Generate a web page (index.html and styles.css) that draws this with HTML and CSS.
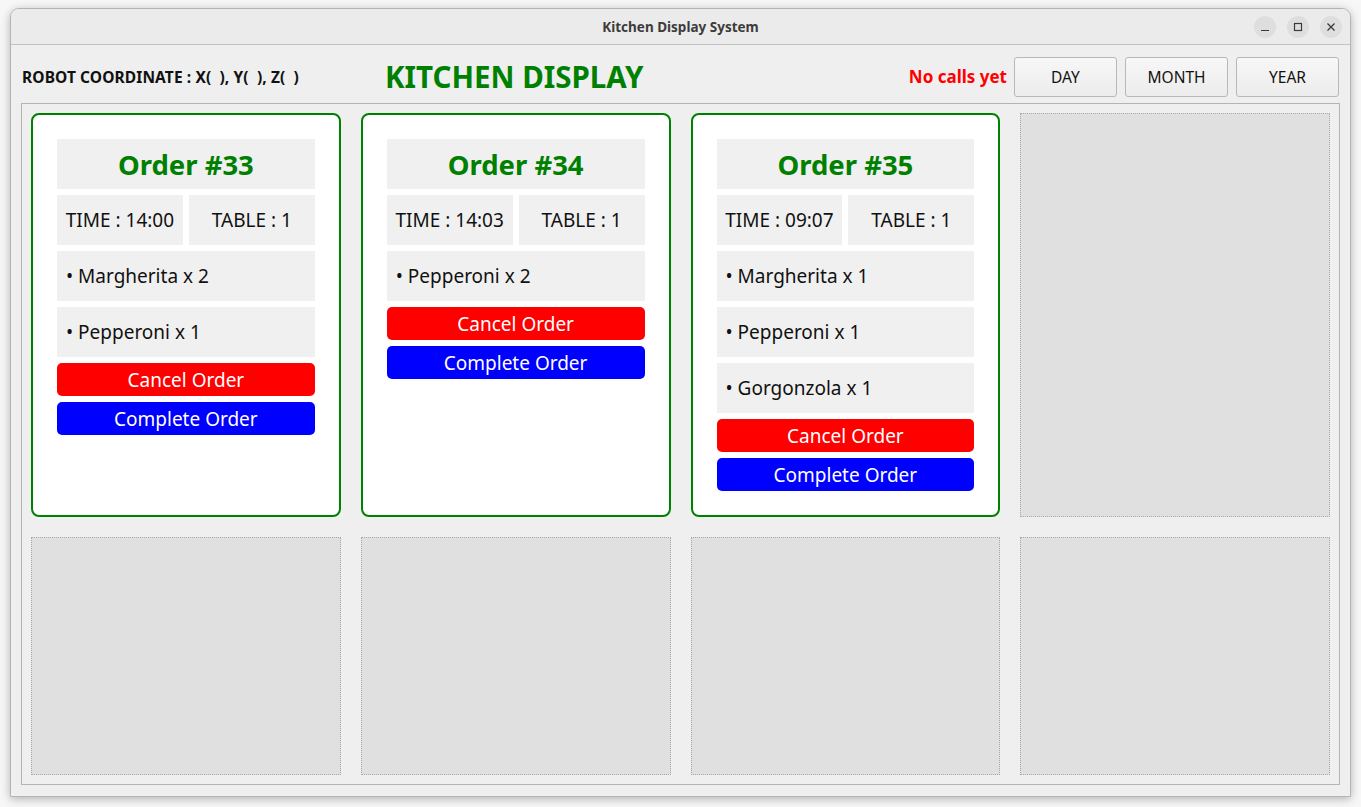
FILE: index.html
```html
<!DOCTYPE html>
<html>
<head>
<meta charset="utf-8">
<title>Kitchen Display System</title>
<link rel="stylesheet" href="styles.css">
</head>
<body>
<div class="window">
  <div class="titlebar">
    <div class="title">Kitchen Display System</div>
    <div class="wm-buttons">
      <span class="wm-btn"><svg width="10" height="10" viewBox="0 0 10 10"><line x1="1" y1="8.5" x2="9" y2="8.5" stroke="#3a3a3a" stroke-width="1.2"/></svg></span>
      <span class="wm-btn"><svg width="10" height="10" viewBox="0 0 10 10"><rect x="1.5" y="1.5" width="7" height="7" fill="none" stroke="#3a3a3a" stroke-width="1.2"/></svg></span>
      <span class="wm-btn"><svg width="10" height="10" viewBox="0 0 10 10"><path d="M1.5 1.5 L8.5 8.5 M8.5 1.5 L1.5 8.5" stroke="#3a3a3a" stroke-width="1.3"/></svg></span>
    </div>
  </div>
  <div class="body">
    <div class="header">
      <div class="robot">ROBOT COORDINATE : X(&nbsp; ), Y(&nbsp; ), Z(&nbsp; )</div>
      <div class="main-title">KITCHEN DISPLAY</div>
      <div class="spacer"></div>
      <div class="calls">No calls yet</div>
      <button class="period">DAY</button>
      <button class="period">MONTH</button>
      <button class="period">YEAR</button>
    </div>
    <div class="frame">
      <div class="card">
        <div class="box order-no">Order #33</div>
        <div class="meta">
          <div class="box meta-cell">TIME : 14:00</div>
          <div class="box meta-cell">TABLE : 1</div>
        </div>
        <div class="box item">• Margherita x 2</div>
        <div class="box item">• Pepperoni x 1</div>
        <div class="action cancel">Cancel Order</div>
        <div class="action complete">Complete Order</div>
      </div>
      <div class="card">
        <div class="box order-no">Order #34</div>
        <div class="meta">
          <div class="box meta-cell">TIME : 14:03</div>
          <div class="box meta-cell">TABLE : 1</div>
        </div>
        <div class="box item">• Pepperoni x 2</div>
        <div class="action cancel">Cancel Order</div>
        <div class="action complete">Complete Order</div>
      </div>
      <div class="card">
        <div class="box order-no">Order #35</div>
        <div class="meta">
          <div class="box meta-cell">TIME : 09:07</div>
          <div class="box meta-cell">TABLE : 1</div>
        </div>
        <div class="box item">• Margherita x 1</div>
        <div class="box item">• Pepperoni x 1</div>
        <div class="box item">• Gorgonzola x 1</div>
        <div class="action cancel">Cancel Order</div>
        <div class="action complete">Complete Order</div>
      </div>
      <div class="empty"></div>
      <div class="empty"></div>
      <div class="empty"></div>
      <div class="empty"></div>
      <div class="empty"></div>
    </div>
  </div>
</div>
</body>
</html>
```

FILE: styles.css
```css
* { box-sizing: border-box; }
html, body { margin: 0; padding: 0; }
body {
  background: #f7f7f7;
  font-family: "Noto Sans", "DejaVu Sans", sans-serif;
  width: 1361px;
  height: 807px;
  overflow: hidden;
  padding: 8px 10px 10px 10px;
}
.window {
  width: 1341px;
  height: 789px;
  background: #efefef;
  border: 1px solid #b4b4b4;
  border-radius: 9px 9px 0 0;
  box-shadow: 0 2px 10px rgba(0,0,0,0.28);
  display: flex;
  flex-direction: column;
  overflow: hidden;
}
.titlebar {
  height: 36px;
  flex: none;
  background: #ebebeb;
  border-bottom: 1px solid #c2c2c2;
  display: flex;
  align-items: center;
  justify-content: center;
  position: relative;
}
.title {
  font-size: 13.5px;
  font-weight: bold;
  color: #3c3c3c;
}
.wm-buttons {
  position: absolute;
  right: 8px;
  top: 7px;
  display: flex;
  gap: 11px;
}
.wm-btn {
  width: 22px;
  height: 22px;
  border-radius: 50%;
  background: #dedede;
  display: flex;
  align-items: center;
  justify-content: center;
}
.body {
  flex: 1;
  display: flex;
  flex-direction: column;
  padding: 0 10px 11px 10px;
}
.header {
  height: 58px;
  flex: none;
  display: flex;
  align-items: center;
  padding: 5px 1px 0 1px;
}
.robot {
  font-size: 15.5px;
  font-weight: bold;
  color: #111;
  letter-spacing: 0.1px;
}
.main-title {
  margin-left: 86px;
  font-size: 29.5px;
  font-weight: bold;
  color: #008000;
}
.spacer { flex: 1; }
.calls {
  font-size: 17px;
  font-weight: bold;
  color: #ff0000;
  margin-right: 7px;
}
.period {
  width: 103px;
  height: 40px;
  margin-left: 8px;
  font-family: inherit;
  font-size: 15.5px;
  color: #111;
  background: linear-gradient(#f7f7f7, #ececec);
  border: 1px solid #b8b8b8;
  border-radius: 3px;
}
.period:first-of-type { margin-left: 0; }
.frame {
  flex: 1;
  border: 1px solid #b4b4b4;
  padding: 9px;
  display: grid;
  grid-template-columns: repeat(4, 1fr);
  grid-template-rows: auto 1fr;
  gap: 20px;
}
.card {
  background: #fff;
  border: 2px solid #008000;
  border-radius: 8px;
  padding: 24px;
  display: flex;
  flex-direction: column;
  gap: 6px;
}
.box {
  height: 50px;
  background: #f0f0f0;
  display: flex;
  align-items: center;
  font-size: 19px;
  color: #111;
}
.order-no {
  justify-content: center;
  font-size: 27.5px;
  font-weight: bold;
  color: #008000;
}
.meta {
  display: grid;
  grid-template-columns: 1fr 1fr;
  gap: 6px;
}
.meta-cell { justify-content: center; }
.item { padding-left: 9px; }
.action {
  height: 33px;
  border-radius: 5px;
  color: #fff;
  font-size: 19px;
  display: flex;
  align-items: center;
  justify-content: center;
}
.cancel { background: #ff0000; }
.complete { background: #0000ff; }
.empty {
  background: #e0e0e0;
  border: 1px dotted #a8a8a8;
}
```
